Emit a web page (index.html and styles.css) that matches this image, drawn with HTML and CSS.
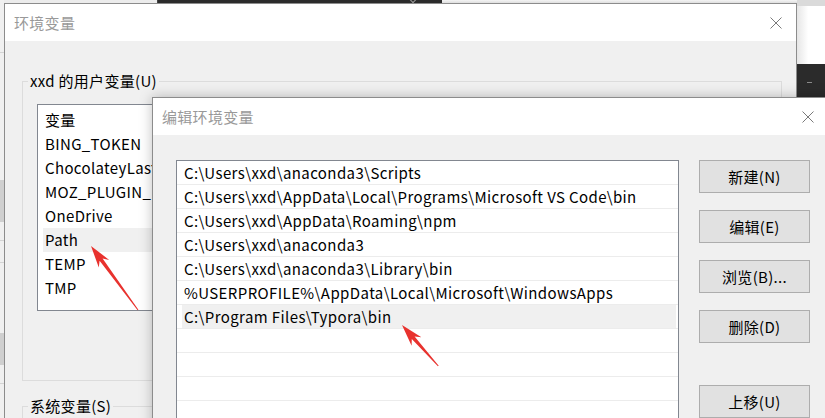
FILE: index.html
```html
<!DOCTYPE html>
<html lang="zh-CN">
<head>
<meta charset="utf-8">
<title>编辑环境变量</title>
<link rel="stylesheet" href="styles.css">
</head>
<body>
<div class="desk">
  <div class="bg-top">
    <div class="bg-top-a"></div>
    <div class="bg-top-b"><span class="chev"></span></div>
    <div class="bg-top-c"></div>
  </div>
  <div class="bg-left">
    <i class="ln l1"></i><i class="blk b1"></i><i class="ln l2"></i><i class="ln l3"></i><i class="blk b2"></i><i class="ln l4"></i>
  </div>
  <div class="bg-right">
    <div class="bg-right-top"></div>
    <div class="bg-right-dark"><i class="dash"></i></div>
  </div>

  <section class="win win-main">
    <header class="titlebar">
      <span class="title">环境变量</span>
      <svg class="close" width="12" height="12" viewBox="0 0 12 12"><path d="M0.5 0.5L11.5 11.5M11.5 0.5L0.5 11.5" stroke="#7a7a7a" stroke-width="1" fill="none"/></svg>
    </header>
    <div class="win-body">
      <fieldset class="group">
        <legend>xxd 的用户变量(U)</legend>
        <ul class="varlist">
          <li>变量</li>
          <li>BING_TOKEN</li>
          <li>ChocolateyLastPathUpdate</li>
          <li>MOZ_PLUGIN_PATH</li>
          <li>OneDrive</li>
          <li class="sel">Path</li>
          <li>TEMP</li>
          <li>TMP</li>
        </ul>
      </fieldset>
      <fieldset class="group group-sys">
        <legend>系统变量(S)</legend>
      </fieldset>
    </div>
  </section>

  <section class="win win-edit">
    <header class="titlebar">
      <span class="title">编辑环境变量</span>
      <svg class="close" width="12" height="12" viewBox="0 0 12 12"><path d="M0.5 0.5L11.5 11.5M11.5 0.5L0.5 11.5" stroke="#7a7a7a" stroke-width="1" fill="none"/></svg>
    </header>
    <div class="edit-body">
      <ul class="pathlist">
        <li>C:\Users\xxd\anaconda3\Scripts</li>
        <li>C:\Users\xxd\AppData\Local\Programs\Microsoft VS Code\bin</li>
        <li>C:\Users\xxd\AppData\Roaming\npm</li>
        <li>C:\Users\xxd\anaconda3</li>
        <li>C:\Users\xxd\anaconda3\Library\bin</li>
        <li>%USERPROFILE%\AppData\Local\Microsoft\WindowsApps</li>
        <li class="sel">C:\Program Files\Typora\bin</li>
        <li></li>
        <li></li>
        <li></li>
        <li></li>
      </ul>
      <div class="buttons">
        <button class="btn">新建(N)</button>
        <button class="btn">编辑(E)</button>
        <button class="btn">浏览(B)...</button>
        <button class="btn">删除(D)</button>
        <button class="btn btn-gap">上移(U)</button>
      </div>
    </div>
  </section>

  <svg class="arrows" width="825" height="418" viewBox="0 0 825 418">
    <polygon fill="#e8322e" points="91,246 109.2,259.9 102.6,258.6 138.4,309.7 137.6,310.3 99.6,260.8 98.8,267.5"/>
    <polygon fill="#e8322e" points="402,325 421.4,337.2 414.6,336.6 438.7,365.7 437.9,366.3 411.8,339.0 411.6,345.8"/>
  </svg>
</div>
</body>
</html>
```

FILE: styles.css
```css
* { box-sizing: border-box; }
html, body { margin: 0; padding: 0; }
body {
  width: 825px;
  height: 418px;
  overflow: hidden;
  background: #f0f0f0;
  font-family: "Noto Sans CJK SC", "Noto Sans", sans-serif;
  font-size: 15px;
  color: #000;
}
.desk { position: relative; width: 825px; height: 418px; overflow: hidden; }

/* desktop background pieces */
.bg-top { position: absolute; left: 0; top: 0; width: 825px; height: 4px; display: flex; }
.bg-top-a { width: 157px; background: #ececec; }
.bg-top-b { width: 285px; background: #2b2b2b; position: relative; border-left: 1px solid #444; }
.bg-top-c { flex: 1; background: linear-gradient(#f4f4f4, #d8d8d8); }
.chev { position: absolute; left: 252px; top: -4px; width: 6px; height: 6px; border-right: 1px solid #999; border-bottom: 1px solid #999; transform: rotate(45deg); }

.bg-left { position: absolute; left: 0; top: 0; width: 4px; height: 418px; background: #f0f0f0; }
.bg-left .ln { position: absolute; left: 0; width: 4px; height: 1px; background: #d4d4d4; }
.bg-left .blk { position: absolute; left: 0; width: 4px; background: #cfcfcf; }
.l1 { top: 52px; } .l2 { top: 240px; } .l3 { top: 262px; } .l4 { top: 383px; }
.b1 { top: 180px; height: 42px; } .b2 { top: 333px; height: 32px; }

.bg-right { position: absolute; left: 797px; top: 0; width: 28px; height: 97px; display: flex; flex-direction: column; }
.bg-right-top { height: 64px; background: linear-gradient(90deg, #e6e6e6, #ffffff 40%); border-top: 6px solid #dadada; }
.bg-right-dark { flex: 1; background: #2b2b2b; position: relative; }
.dash { position: absolute; left: 10px; top: 18px; width: 5px; height: 1px; background: #8a8a8a; }

/* windows */
.win { position: absolute; background: #f0f0f0; border: 1px solid #8c8c8c; }
.win-main { left: 4px; top: 3px; width: 793px; height: 430px; }
.win-edit { left: 152px; top: 97px; width: 690px; height: 340px; box-shadow: 0 0 12px rgba(0,0,0,0.25); }

.titlebar {
  height: 37px;
  background: #fff;
  display: flex;
  align-items: center;
  justify-content: space-between;
  padding: 0 14px 0 9px;
}
.win-edit .titlebar { padding-right: 27px; }
.title { color: #999; font-size: 15px; letter-spacing: 0.3px; }
.close { display: block; }

/* main window body */
.win-body { padding: 30px 14px 0 17px; }
.group {
  margin: 0;
  padding: 0;
  border: 1px solid #dcdcdc;
  min-width: 0;
}
.group legend { margin-left: 5px; padding: 0 2px; line-height: 20px; letter-spacing: 0.3px; }
.varlist {
  list-style: none;
  margin: 13px 0 69px 14px;
  padding: 3px 0 0 0;
  width: 720px;
  height: 207px;
  background: #fff;
  border: 1px solid #828790;
}
.varlist li { height: 24px; line-height: 24px; padding-left: 7px; white-space: nowrap; letter-spacing: 0.35px; }
.varlist li.sel { background: linear-gradient(#f0f0f0, #f0f0f0) 5px 0 / 100% 100% no-repeat; }
.group-sys { margin-top: 15px; height: 60px; }

/* edit dialog body */
.edit-body { display: flex; align-items: flex-start; gap: 20px; padding: 25px 0 0 23px; }
.pathlist {
  list-style: none;
  margin: 0;
  padding: 0;
  width: 503px;
  height: 300px;
  background: #fff;
  border: 1px solid #828790;
  overflow: hidden;
}
.pathlist li {
  height: 24px;
  line-height: 23px;
  border-bottom: 1px solid #ececec;
  padding-left: 7px;
  white-space: nowrap;
  letter-spacing: 0.4px;
}
.pathlist li.sel { background: linear-gradient(#f0f0f0, #f0f0f0) 5px 0 / calc(100% - 7px) 100% no-repeat; }

.buttons { display: flex; flex-direction: column; gap: 17px; }
.btn {
  width: 111px;
  height: 33px;
  padding: 0;
  background: #e1e1e1;
  border: 1px solid #adadad;
  font-family: inherit;
  font-size: 15px;
  color: #000;
  letter-spacing: 0.3px;
}
.btn-gap { margin-top: 25px; }

.arrows { position: absolute; left: 0; top: 0; pointer-events: none; }
```
